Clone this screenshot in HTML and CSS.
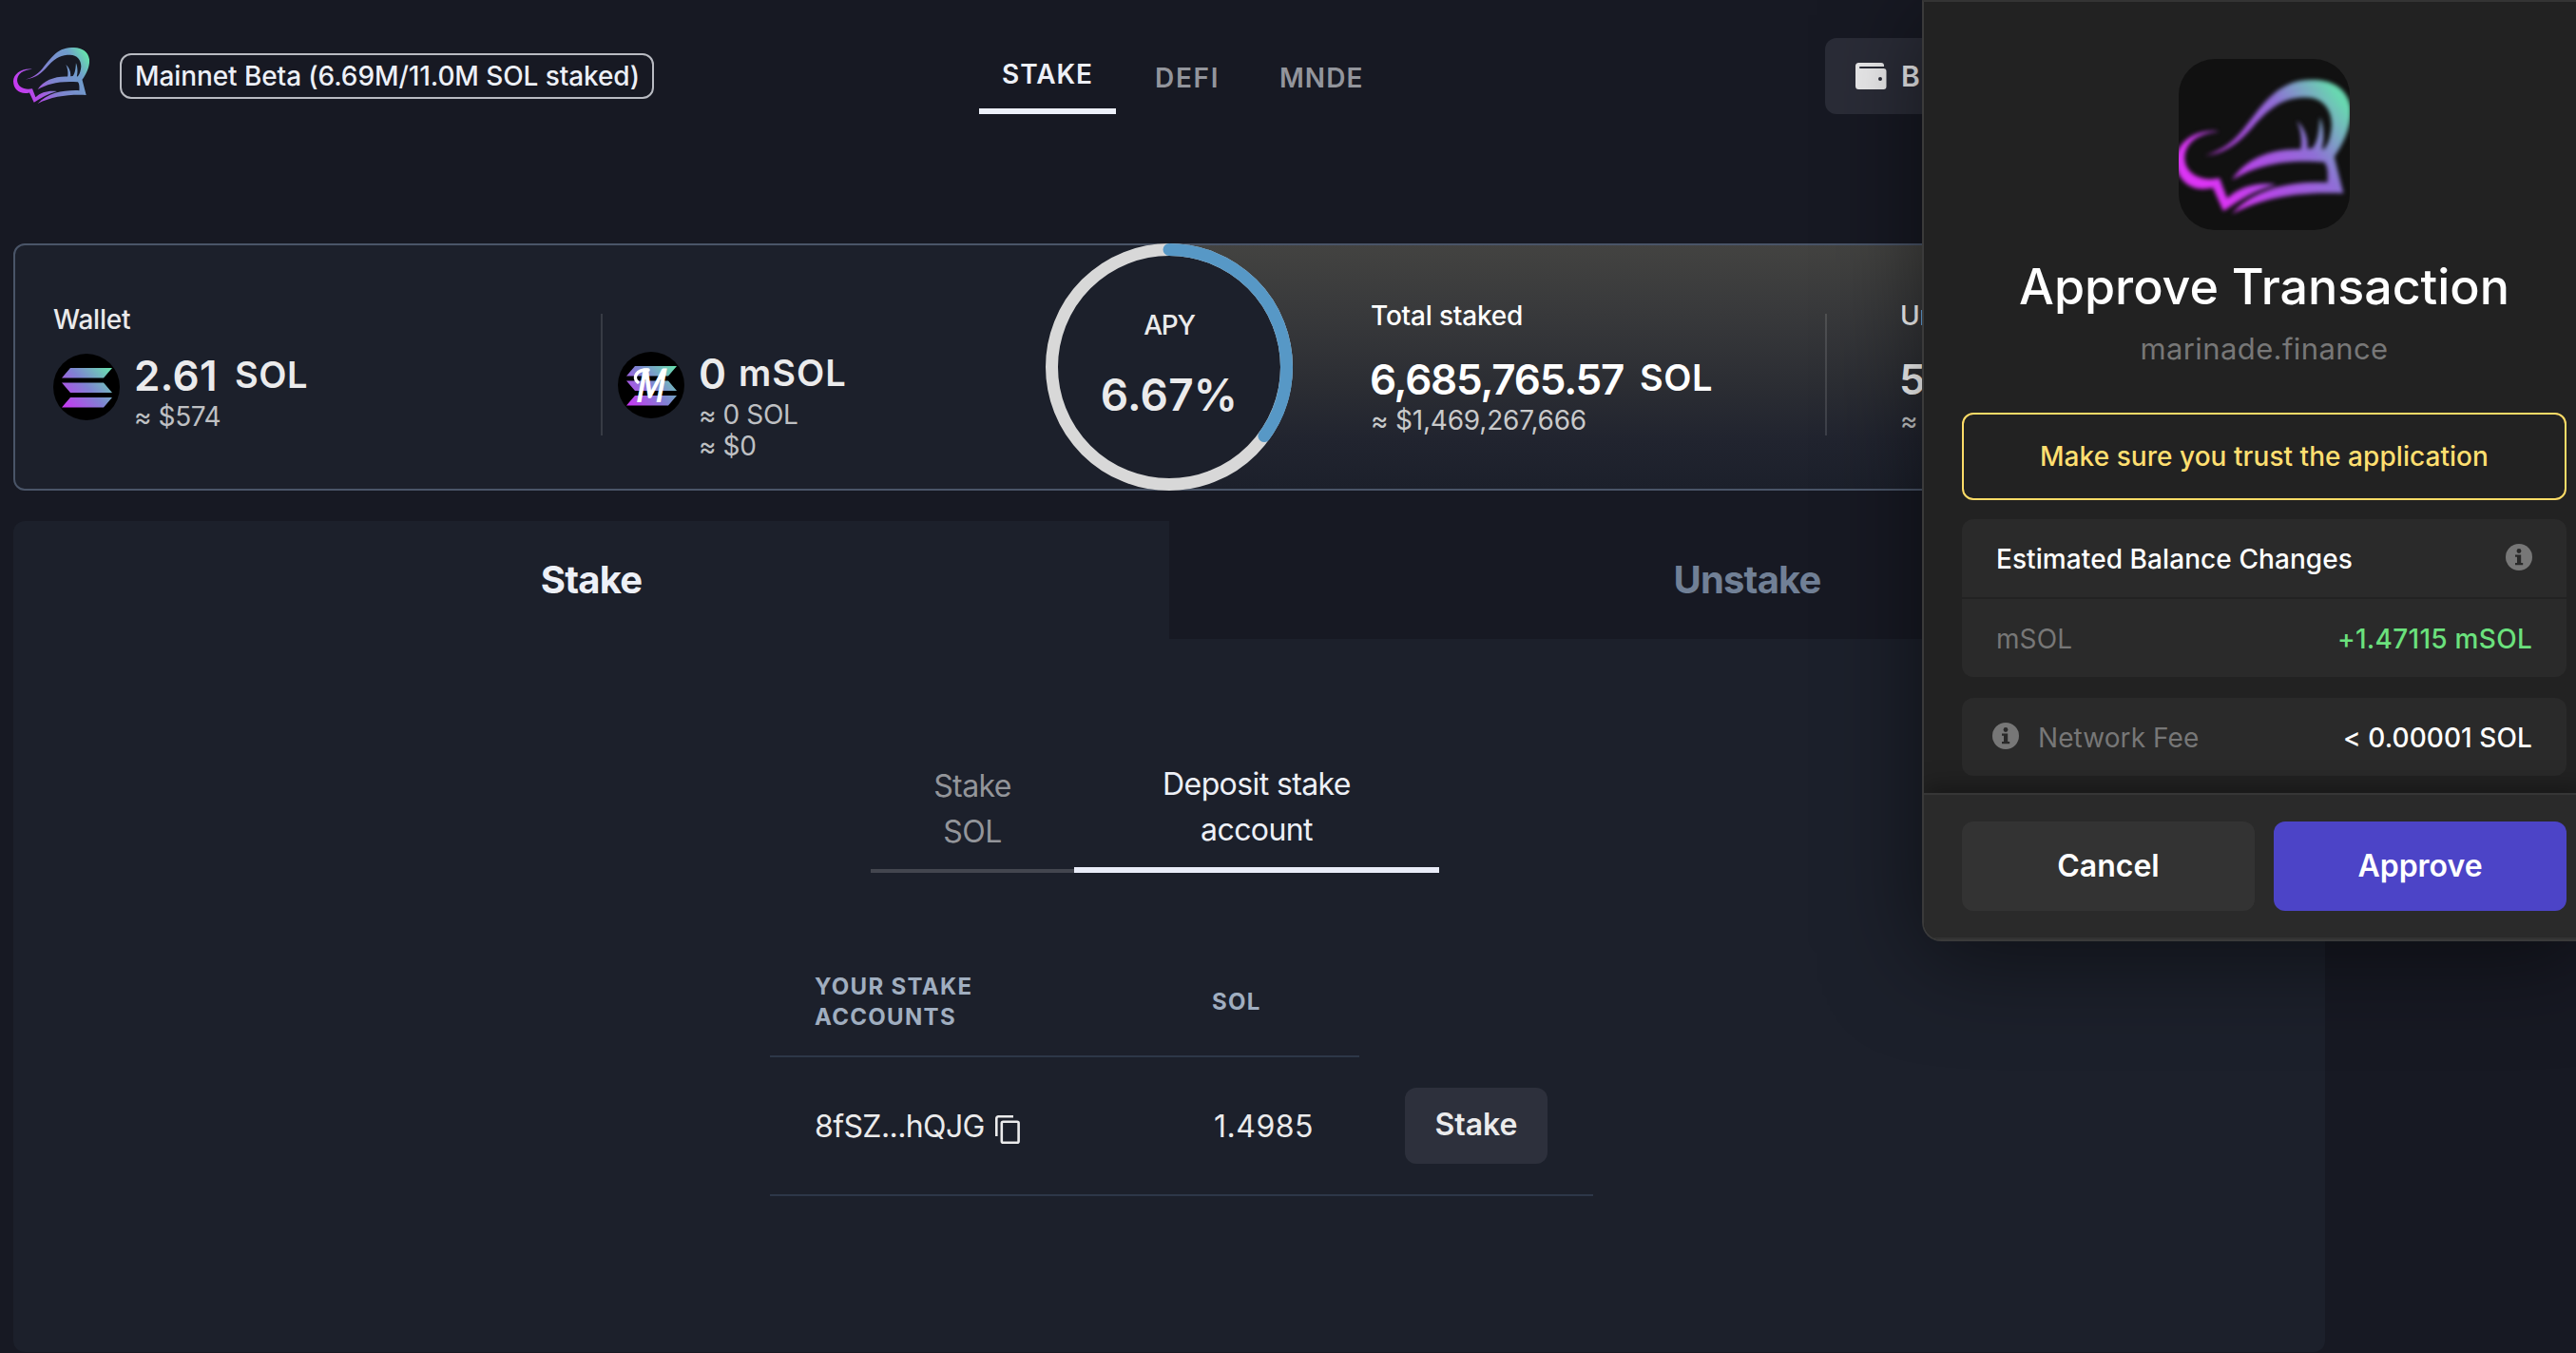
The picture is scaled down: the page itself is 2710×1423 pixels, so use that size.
FILE: index.html
```html
<!DOCTYPE html>
<html lang="en">
<head>
<meta charset="utf-8">
<title>Marinade</title>
<link rel="stylesheet" href="styles.css">
</head>
<body>
<svg class="defs" aria-hidden="true">
  <defs>
    <linearGradient id="hat-page" gradientUnits="userSpaceOnUse" x1="110" y1="440" x2="625" y2="150">
      <stop offset="0" stop-color="#cb35f3"/><stop offset=".2" stop-color="#b14ee6"/><stop offset=".45" stop-color="#7f83cf"/><stop offset=".8" stop-color="#6f9ecb"/><stop offset="1" stop-color="#66e6ab"/>
    </linearGradient>
    <linearGradient id="hat-popup" gradientUnits="userSpaceOnUse" x1="200" y1="440" x2="600" y2="150">
      <stop offset="0" stop-color="#dc34f5"/><stop offset=".3" stop-color="#b14be6"/><stop offset=".65" stop-color="#8f6fd6"/><stop offset="1" stop-color="#68d8b0"/>
    </linearGradient>
    <linearGradient id="coin" gradientUnits="userSpaceOnUse" x1="10" y1="56" x2="60" y2="12">
      <stop offset="0" stop-color="#c935f3"/><stop offset=".5" stop-color="#7f83d2"/><stop offset="1" stop-color="#68e6ac"/>
    </linearGradient>
    <symbol id="hat" viewBox="88 103 552 422" preserveAspectRatio="none">
      <path d="M225 265C150 255 90 300 88 355C88 420 140 460 205 442L238 516C290 480 340 450 405 432C340 425 290 440 250 476L226 412C170 425 118 400 116 350C116 300 160 270 225 265Z"/>
      <path d="M178 342C250 332 290 300 340 240C400 175 440 158 500 158C560 158 590 210 577 270C572 298 564 312 555 322L549 320C557 290 555 250 543 220C541 255 538 295 520 318L503 320C507 290 495 255 470 232C486 265 486 300 482 322C390 318 310 350 265 418C340 375 420 352 557 362C570 380 567 400 567 426C460 422 340 440 265 525C370 470 480 455 617 460L588 345C620 300 645 240 640 190C630 130 580 100 510 103C400 105 350 200 300 260C260 310 220 330 178 342Z"/>
    </symbol>
    <symbol id="sol" viewBox="0 0 70 70">
      <circle cx="35" cy="35" r="35" fill="#000"/>
      <path fill="url(#coin)" d="M18 15H62L53 25.500H9ZM9 30.500H53L62 41H18ZM18 46H62L53 56.500H9Z"/>
    </symbol>
    <symbol id="info" viewBox="0 0 28 28">
      <circle cx="14" cy="14" r="14" fill="#777"/>
      <circle cx="14" cy="7.500" r="2.400" fill="#292929"/>
      <path fill="#292929" d="M10 11.500H16.200V20H18.200V22.200H10V20H12V13.700H10Z"/>
    </symbol>
  </defs>
</svg>

<header class="header">
  <svg class="logo" fill="url(#hat-page)"><use href="#hat"/></svg>
  <span class="network">Mainnet Beta (6.69M/11.0M SOL staked)</span>
  <nav class="nav">
    <a class="nav-link active">STAKE</a>
    <a class="nav-link defi">DEFI</a>
    <a class="nav-link mnde">MNDE</a>
  </nav>
  <button class="wallet-btn">
    <svg width="33" height="28" viewBox="0 0 33 28"><path fill="currentColor" fill-rule="evenodd" d="M3.500 0H27A3 3 0 0 1 30 3V4H5A1 1 0 0 0 5 6H29.500A3 3 0 0 1 32.500 9V25A3 3 0 0 1 29.500 28H3.500A3.500 3.500 0 0 1 0 24.500V3.500A3.500 3.500 0 0 1 3.500 0ZM26 15A2 2 0 1 0 26 19A2 2 0 1 0 26 15Z"/></svg>
    <span>B</span>
  </button>
</header>

<main class="main">
  <section class="stats">
    <div class="half">
      <div class="stat wallet">
        <div class="label">Wallet</div>
        <div class="holding">
          <svg class="coin"><use href="#sol"/></svg>
          <div>
            <div class="amount"><span class="num n-sol">2.61</span><span class="unit">SOL</span></div>
            <div class="approx">≈ $574</div>
          </div>
        </div>
      </div>
      <div class="divider"></div>
      <div class="stat msol">
        <div class="holding">
          <svg class="coin" viewBox="0 0 70 70"><use href="#sol" width="70" height="70"/><text class="script-m" x="0" y="0" transform="translate(19 53) skewX(-6) scale(.68 1)">M</text><path d="M21 32C15 27 20 18 32 19" fill="none" stroke="#fff" stroke-width="3.500" stroke-linecap="round"/></svg>
          <div>
            <div class="amount"><span class="num n-msol">0</span><span class="unit wide">mSOL</span></div>
            <div class="approx">≈ 0 SOL</div>
            <div class="approx">≈ $0</div>
          </div>
        </div>
      </div>
    </div>
    <div class="half pool">
      <div class="stat total">
        <div class="label">Total staked</div>
        <div class="amount"><span class="num n-total">6,685,765.57</span><span class="unit">SOL</span></div>
        <div class="approx">≈ $1,469,267,666</div>
      </div>
      <div class="divider"></div>
      <div class="stat under">
        <div class="label">Un</div>
        <div class="amount"><span class="num">5</span></div>
        <div class="approx">≈</div>
      </div>
    </div>
    <div class="apy">
      <svg class="ring" viewBox="0 0 260 260">
        <circle cx="130" cy="130" r="130" fill="#1c202b"/>
        <circle cx="130" cy="130" r="123.500" fill="none" stroke="#d8d8d8" stroke-width="13"/>
        <circle cx="130" cy="130" r="123.500" fill="none" stroke="#5798c6" stroke-width="13" stroke-linecap="round" pathLength="100" stroke-dasharray="35 100" transform="rotate(-90 130 130)"/>
      </svg>
      <div class="apy-label">APY</div>
      <div class="apy-value">6.67%</div>
    </div>
  </section>

  <section class="panel">
    <div class="tabs">
      <div class="tab">Stake</div>
      <div class="tab off">Unstake</div>
    </div>
    <div class="modes">
      <div class="mode">Stake<br>SOL</div>
      <div class="mode on">Deposit stake<br>account</div>
    </div>
    <div class="accounts">
      <div class="acc-head">
        <div class="th">YOUR STAKE<br>ACCOUNTS</div>
        <div class="th">SOL</div>
      </div>
      <div class="acc-row">
        <div class="key"><span>8fSZ...hQJG</span>
          <svg width="26" height="30" viewBox="0 0 26 30" fill="none" stroke="currentColor" stroke-width="2.600"><path d="M1.300 22V3.300A2 2 0 0 1 3.300 1.300H19"/><rect x="6.800" y="6.800" width="17.800" height="21.900" rx="1.500"/></svg>
        </div>
        <div class="bal">1.4985</div>
        <button class="stake-btn">Stake</button>
      </div>
    </div>
  </section>
</main>

<aside class="popup">
  <div class="popup-body">
    <div class="app-icon"><svg class="app-hat" fill="url(#hat-popup)"><use href="#hat"/></svg></div>
    <h1 class="title">Approve Transaction</h1>
    <div class="origin">marinade.finance</div>
    <div class="warning">Make sure you trust the application</div>
    <div class="box">
      <div class="box-row head"><span>Estimated Balance Changes</span><svg class="info"><use href="#info"/></svg></div>
      <div class="box-row"><span class="dim">mSOL</span><span class="gain">+1.47115 mSOL</span></div>
    </div>
    <div class="box fee">
      <div class="box-row"><span class="dim fee-name"><svg class="info"><use href="#info"/></svg>Network Fee</span><span>&lt; 0.00001 SOL</span></div>
    </div>
  </div>
  <footer class="actions">
    <button class="action">Cancel</button>
    <button class="action primary">Approve</button>
  </footer>
</aside>
</body>
</html>
```
FILE: styles.css
```css
* { box-sizing: border-box; }

body {
  margin: 0;
  width: 2710px;
  height: 1423px;
  overflow: hidden;
  position: relative;
  background: #171923;
  color: #ebebec;
  font: 400 28px/40px Inter, "Liberation Sans", sans-serif;
}

button { border: 0; margin: 0; padding: 0; color: inherit; font: inherit; }
.defs { position: absolute; width: 0; height: 0; }

/* header */
.header { display: flex; align-items: flex-start; height: 256px; padding-left: 14px; }
.logo { width: 80px; height: 59px; margin-top: 50px; flex: none; }
.network {
  flex: none;
  width: 562px;
  height: 48px;
  margin: 56px 0 0 32px;
  padding-left: 14px;
  border: 2px solid #b9bbc2;
  border-radius: 12px;
  font-weight: 500;
  line-height: 45px;
  letter-spacing: -.09px;
  white-space: nowrap;
  color: #edf0f7;
}
.nav { display: flex; align-items: flex-start; width: 890px; margin-left: 342px; }
.nav-link { margin-top: 62px; font-weight: 600; color: #93959c; }
.nav-link.active {
  width: 144px;
  height: 62px;
  margin-top: 58px;
  padding-left: 24px;
  border-bottom: 6px solid #edf0f9;
  letter-spacing: .95px;
  color: #edf0f7;
}
.defi { width: 131px; margin-left: 41px; letter-spacing: 1.690px; }
.mnde { letter-spacing: 1.030px; }
.wallet-btn {
  display: flex;
  align-items: center;
  gap: 15px;
  width: 300px;
  height: 80px;
  margin-top: 40px;
  padding-left: 32px;
  border-radius: 12px;
  background: #2a2c37;
  font-size: 30px;
  font-weight: 600;
}

/* stats card */
.main { width: 2432px; margin-left: 14px; }
.stats {
  position: relative;
  display: flex;
  height: 260px;
  border: 2px solid #4a5568;
  border-radius: 12px;
  background: #1c202b;
}
.half { display: flex; width: 1214px; }
.pool {
  color: #fff;
  border-radius: 0 10px 10px 0;
  background: linear-gradient(180deg, #434341 0%, #38393b 28%, #2b2d33 58%, #21242f 80%, #1c202b 100%);
}
.divider { width: 2px; height: 128px; margin-top: 72px; background: rgba(255, 255, 255, .12); }
.label { font-weight: 500; letter-spacing: -.2px; white-space: nowrap; }
.holding { display: flex; gap: 15px; }
.coin { width: 70px; height: 70px; flex: none; }
.amount { display: flex; height: 50px; line-height: 46px; white-space: nowrap; font-weight: 600; }
.num { font-size: 44px; }
.unit { font-size: 38px; line-height: 45px; letter-spacing: .6px; }
.unit.wide { letter-spacing: 1px; }
.approx { line-height: 33px; letter-spacing: -.4px; color: #bfc0c3; white-space: nowrap; }
.wallet { width: 616px; padding: 58px 0 0 40px; }
.wallet .holding { margin-top: 16px; }
.msol { padding: 112px 0 0 16px; }
.n-sol { width: 106px; letter-spacing: .2px; }
.n-msol { width: 42px; }
.total { width: 690px; padding: 54px 0 0 212px; }
.pool .label { line-height: 41px; height: 40px; }
.pool .amount { margin-top: 23px; }
.pool .approx { line-height: 35px; color: #c9cacb; letter-spacing: -.2px; }
.n-total { width: 284px; letter-spacing: -1.200px; }
.pool .num { line-height: 48px; margin-left: -1px; }
.under { padding: 54px 0 0 77px; }
.script-m { font: italic 900 49px Lato, sans-serif; fill: #fff; }

.apy {
  position: absolute;
  left: 1084px;
  top: -2px;
  width: 260px;
  height: 260px;
  padding-top: 66px;
  text-align: center;
}
.ring { position: absolute; left: 0; top: 0; width: 260px; height: 260px; }
.apy-label { position: relative; font-weight: 500; letter-spacing: -1.200px; }
.apy-value { position: relative; margin-top: 28px; font-size: 46px; line-height: 50px; font-weight: 600; letter-spacing: .2px; }

/* staking panel */
.panel { height: 874px; margin-top: 32px; border-radius: 12px; overflow: hidden; background: #1c202b; }
.tabs { display: flex; height: 124px; }
.tab { flex: 1; text-align: center; font-size: 40px; font-weight: 700; line-height: 123px; letter-spacing: -.8px; color: #edf0f7; }
.tab.off { background: #171923; color: #718096; }
.modes { display: flex; align-items: flex-end; width: 598px; height: 118px; margin: 128px 0 0 902px; }
.mode {
  width: 214px;
  padding-bottom: 15px;
  border-bottom: 4px solid #43464f;
  font-size: 32px;
  line-height: 48px;
  letter-spacing: -.6px;
  text-align: center;
  color: #93959a;
}
.mode.on { width: 384px; border-bottom: 6px solid #e9ecf8; color: #edf0f7; }
.accounts { width: 866px; margin: 80px 0 0 796px; }
.acc-head {
  display: grid;
  grid-template-columns: 465px 1fr;
  align-items: center;
  width: 620px;
  height: 114px;
  border-bottom: 2px solid #2d3748;
}
.th { font-size: 24px; font-weight: 700; line-height: 32px; letter-spacing: 1.300px; color: #a0aec0; }
.th:first-child, .key { padding-left: 47px; }
.acc-row {
  display: grid;
  grid-template-columns: 467px 201px 150px;
  align-items: center;
  height: 146px;
  border-bottom: 2px solid #2d3748;
  font-size: 32px;
}
.key { display: flex; align-items: center; gap: 11px; letter-spacing: -.6px; }
.key svg { margin-top: 8px; }
.key span, .bal { padding-top: 2px; }
.bal { letter-spacing: .49px; }
.stake-btn { height: 80px; padding-bottom: 3px; border-radius: 12px; background: #2d303c; font-weight: 600; }

/* wallet approval popup */
.popup {
  position: absolute;
  left: 2022px;
  top: 0;
  width: 700px;
  height: 990px;
  border: 2px solid #3a3a3a;
  border-top-color: #343434;
  border-radius: 0 0 0 20px;
  overflow: hidden;
  background: #222;
  color: #fff;
  font-weight: 500;
  box-shadow: 0 16px 100px rgba(0, 0, 0, .5);
}
.popup-body { display: flex; flex-direction: column; width: 676px; height: 832px; padding: 60px 0 0 40px; }
.app-icon { width: 180px; height: 180px; margin: 0 auto; border-radius: 38px; overflow: hidden; background: #111; }
.app-hat { display: block; width: 184px; height: 141px; margin: 22px 0 0 -3px; overflow: visible; filter: blur(1.900px); }
.title { margin: 28px 0 0; font-size: 52px; line-height: 64px; font-weight: 500; letter-spacing: -.05px; text-align: center; }
.origin { margin-top: 13px; font-size: 31px; font-weight: 400; letter-spacing: .4px; text-align: center; color: #777; }
.warning {
  height: 92px;
  margin-top: 47px;
  border: 2px solid #ffdc67;
  border-radius: 12px;
  line-height: 89px;
  letter-spacing: .05px;
  text-align: center;
  color: #ffdf70;
}
.box { margin-top: 20px; border-radius: 12px; background: #2a2a2a; letter-spacing: .08px; }
.box.fee { margin-top: 22px; }
.box-row { display: flex; align-items: center; justify-content: space-between; height: 82px; padding: 1px 36px 0 36px; }
.box-row.head { height: 84px; border-bottom: 2px solid #222; }
.info { width: 28px; height: 28px; flex: none; margin-top: -3px; }
.dim { color: #777; font-weight: 400; }
.gain { color: #6be17d; letter-spacing: .28px; }
.fee-name { display: flex; align-items: center; gap: 20px; margin-left: -4px; }
.actions {
  position: relative;
  display: flex;
  gap: 20px;
  height: 154px;
  padding: 28px 0 0 40px;
  border-top: 2px solid #363636;
  border-bottom: 2px solid #333;
  background: #2a2a2a;
  box-shadow: 0 -6px 24px rgba(0, 0, 0, .35);
}
.action { width: 308px; height: 94px; border-radius: 12px; background: #333; font-size: 32px; font-weight: 600; }
.action.primary { background: #4c44c7; }
```
